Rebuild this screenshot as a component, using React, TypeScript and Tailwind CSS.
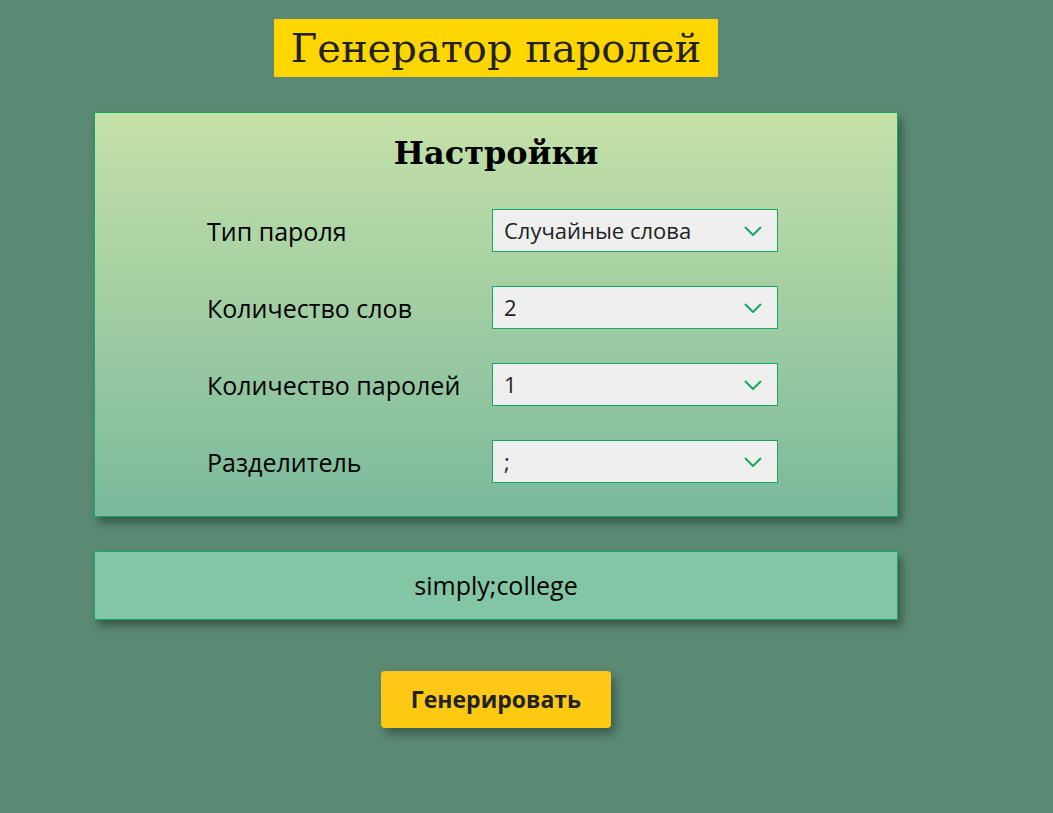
const rows = [
  { label: "Тип пароля", value: "Случайные слова" },
  { label: "Количество слов", value: "2" },
  { label: "Количество паролей", value: "1" },
  { label: "Разделитель", value: ";" },
];

function Chevron() {
  return (
    <svg width="18" height="10" viewBox="0 0 18 10" fill="none" className="text-[#17a862]">
      <polyline points="1,1 9,9 17,1" stroke="currentColor" strokeWidth="2" />
    </svg>
  );
}

export default function App() {
  return (
    <main className="min-h-screen bg-[#5a8a74] font-['Open_Sans',sans-serif] text-black">
      <div className="ml-[94px] flex w-[804px] flex-col items-center pt-[19px]">
        <h1 className="bg-[#ffd600] px-[17px] font-['DejaVu_Serif',serif] text-[40px] leading-[58px] text-[#222]">
          Генератор паролей
        </h1>

        <section className="mt-[35px] flex w-full flex-col items-center border border-[#17a862] bg-gradient-to-b from-[#c5e1a8] to-[#7ab99c] pb-[33px] shadow-[4px_6px_8px_rgba(0,0,0,0.35)]">
          <h2 className="mt-[17px] font-['DejaVu_Serif',serif] text-[32px] font-bold leading-[46px]">
            Настройки
          </h2>
          <div className="ml-[112px] mt-[33px] flex w-[572px] flex-col gap-[34px] self-start">
            {rows.map((row) => (
              <div key={row.label} className="flex items-center">
                <span className="w-[285px] text-[25px] leading-[30px]">{row.label}</span>
                <div className="flex h-[43px] w-[286px] items-center justify-between border border-[#17a862] bg-[#efefef] pl-[11px] pr-[15px]">
                  <span className="text-[22px] text-[#222]">{row.value}</span>
                  <Chevron />
                </div>
              </div>
            ))}
          </div>
        </section>

        <div className="mt-[34px] flex h-[69px] w-full items-center justify-center border border-[#17a862] bg-[#83c6a6] text-[25px] shadow-[4px_6px_8px_rgba(0,0,0,0.35)]">
          simply;college
        </div>

        <button className="mt-[51px] h-[57px] w-[230px] rounded-[4px] bg-gradient-to-b from-[#ffc61a] to-[#fccb0e] text-[23px] font-bold text-[#222] shadow-[4px_6px_10px_rgba(0,0,0,0.35)]">
          Генерировать
        </button>
      </div>
    </main>
  );
}
